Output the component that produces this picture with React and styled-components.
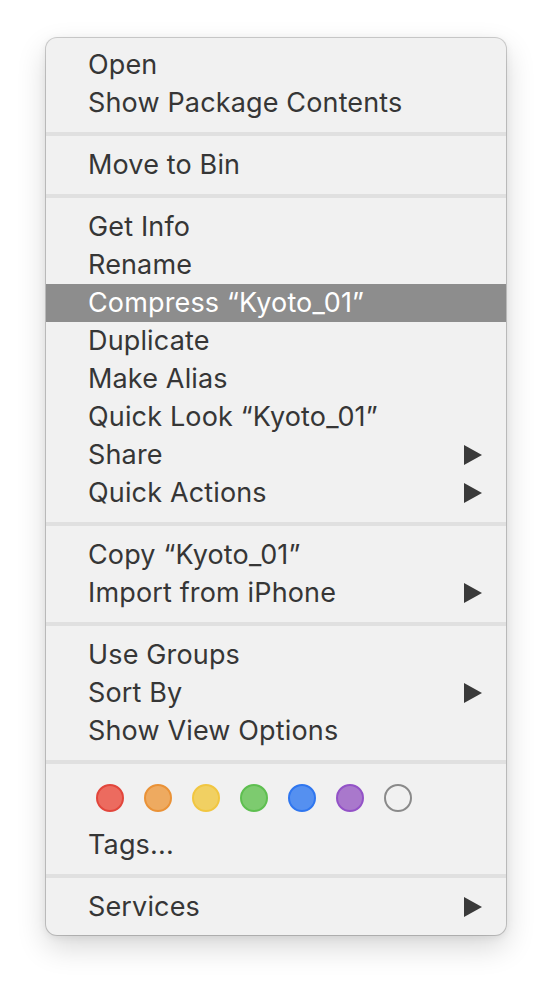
import React from "react";
import styled, { createGlobalStyle } from "styled-components";

const Global = createGlobalStyle`
  html, body { margin: 0; padding: 0; background: #ffffff; }
  body { font-family: Inter, "Noto Sans", "Liberation Sans", sans-serif; }
`;

const Page = styled.div`
  padding: 38px 46px 54px 46px;
  display: flex;
`;

const Menu = styled.div`
  width: 460px;
  box-sizing: border-box;
  background: #f1f1f1;
  border-radius: 11px;
  padding: 8px 0 9px 0;
  box-shadow: 0 0 0 1px rgba(0, 0, 0, 0.18), 0 12px 30px rgba(0, 0, 0, 0.16),
    0 2px 8px rgba(0, 0, 0, 0.08);
  display: flex;
  flex-direction: column;
`;

const Row = styled.div`
  height: 38px;
  box-sizing: border-box;
  display: flex;
  align-items: center;
  justify-content: space-between;
  padding: 0 24px 2px 42px;
  background: ${(p) => (p.$active ? "#8d8d8d" : "transparent")};
  color: ${(p) => (p.$active ? "#ffffff" : "#363636")};
  font-size: 27px;
  letter-spacing: 0.15px;
`;

const Label = styled.span`
  white-space: nowrap;
`;

const Separator = styled.div`
  height: 24px;
  display: flex;
  align-items: center;
  &::after {
    content: "";
    flex: 1;
    height: 4px;
    background: #e0e0e0;
  }
`;

const TagRow = styled.div`
  height: 52px;
  display: flex;
  align-items: flex-start;
  gap: 20px;
  padding: 10px 0 0 50px;
  box-sizing: border-box;
`;

const Dot = styled.span`
  width: 28px;
  height: 28px;
  box-sizing: border-box;
  border-radius: 50%;
  background: ${(p) => p.$fill};
  border: 2px solid ${(p) => p.$stroke};
`;

const ArrowBox = styled.span`
  display: flex;
  margin-bottom: -2px;
`;

const Arrow = () => (
  <ArrowBox>
    <svg width="18" height="20" viewBox="0 0 18 20">
      <path d="M0 0 L18 10 L0 20 Z" fill="#3a3a3a" />
    </svg>
  </ArrowBox>
);

const Item = ({ label, sub, active }) => (
  <Row $active={active}>
    <Label>{label}</Label>
    {sub && <Arrow />}
  </Row>
);

const tags = [
  ["#ec6b5f", "#e2463c"],
  ["#eeaa60", "#ea9237"],
  ["#f1d062", "#f1c641"],
  ["#7dcb6f", "#5ebf50"],
  ["#5590f0", "#2f76ef"],
  ["#a978cc", "#9352c7"],
  ["transparent", "#8a8a8a"],
];

export default function App() {
  return (
    <>
      <Global />
      <Page>
        <Menu>
          <Item label="Open" />
          <Item label="Show Package Contents" />
          <Separator />
          <Item label="Move to Bin" />
          <Separator />
          <Item label="Get Info" />
          <Item label="Rename" />
          <Item label="Compress “Kyoto_01”" active />
          <Item label="Duplicate" />
          <Item label="Make Alias" />
          <Item label="Quick Look “Kyoto_01”" />
          <Item label="Share" sub />
          <Item label="Quick Actions" sub />
          <Separator />
          <Item label="Copy “Kyoto_01”" />
          <Item label="Import from iPhone" sub />
          <Separator />
          <Item label="Use Groups" />
          <Item label="Sort By" sub />
          <Item label="Show View Options" />
          <Separator />
          <TagRow>
            {tags.map(([f, s], i) => (
              <Dot key={i} $fill={f} $stroke={s} />
            ))}
          </TagRow>
          <Item label="Tags..." />
          <Separator />
          <Item label="Services" sub />
        </Menu>
      </Page>
    </>
  );
}
